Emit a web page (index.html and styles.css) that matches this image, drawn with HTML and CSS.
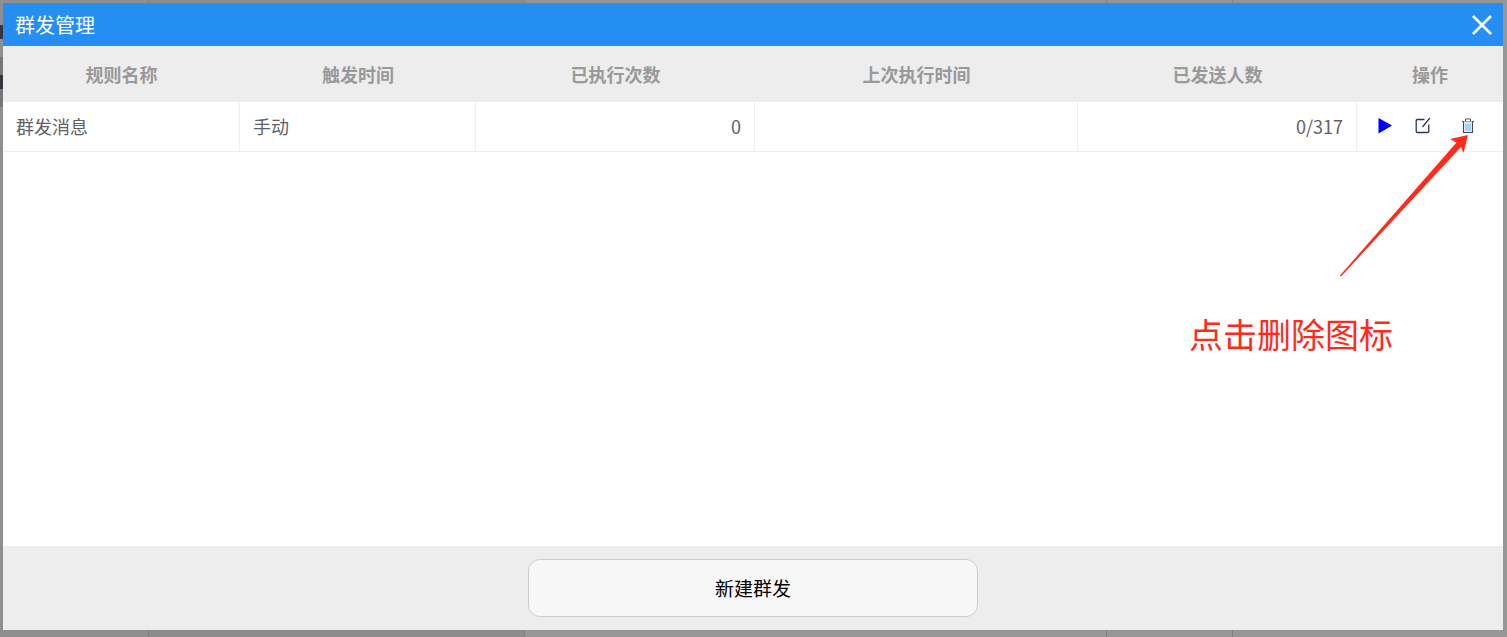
FILE: index.html
```html
<!DOCTYPE html>
<html lang="zh-CN">
<head>
  <meta charset="UTF-8">
  <title>群发管理</title>
  <link rel="stylesheet" href="styles.css">
</head>
<body>
  <!-- page behind the mask, only its edges show -->
  <div class="backdrop">
    <div class="back-col back-first">
      <div class="back-row"><i class="back-mark"></i></div>
      <div class="back-row back-band"><i class="back-mark"></i></div>
    </div>
    <div class="back-col back-second"></div>
    <div class="back-col back-third"></div>
    <div class="back-col back-fourth"></div>
    <div class="back-col back-fifth"></div>
  </div>

  <div class="dialog">
    <div class="dialog-title">
      <span>群发管理</span>
      <svg class="close-icon" viewBox="0 0 20 20" width="20" height="20">
        <path d="M1 1L19 19M19 1L1 19" stroke="#fff" stroke-width="2.6" fill="none"/>
      </svg>
    </div>
    <div class="dialog-body">
      <div class="table-row table-head">
        <div class="cell center">规则名称</div>
        <div class="cell center">触发时间</div>
        <div class="cell center">已执行次数</div>
        <div class="cell center">上次执行时间</div>
        <div class="cell center">已发送人数</div>
        <div class="cell center">操作</div>
      </div>
      <div class="table-row table-data">
        <div class="cell">群发消息</div>
        <div class="cell">手动</div>
        <div class="cell right">0</div>
        <div class="cell"></div>
        <div class="cell right">0/317</div>
        <div class="cell actions">
          <svg viewBox="0 0 16 18" width="16" height="18">
            <path d="M1.5 1L15 8.5L1.5 16.5Z" fill="#0000ff"/>
          </svg>
          <svg viewBox="0 0 16 18" width="16" height="18">
            <path d="M9.5 2.5H2.5Q1.2 2.5 1.2 3.8V14.2Q1.2 15.5 2.5 15.5H12.5Q13.8 15.5 13.8 14.2V7.5" stroke="#27384f" stroke-width="1.3" fill="none"/>
            <path d="M7.5 10L14.8 1" stroke="#27384f" stroke-width="1.2" fill="none"/>
          </svg>
          <svg class="trash-icon" viewBox="0 0 14 18" width="14" height="18">
            <path d="M1 4.5H13M4.5 4.5V2H9.5V4.5" stroke="#4a5664" stroke-width="1" fill="none"/>
            <path d="M2.5 4.5V15.5H11.5V4.5" stroke="#3a4a5c" stroke-width="1.1" fill="#e6f3fc"/>
            <path d="M5 6.5V14M7 6.5V14M9 6.5V14" stroke="#6db2e6" stroke-width="1" fill="none"/>
          </svg>
        </div>
      </div>
    </div>
    <div class="dialog-footer">
      <button class="new-btn">新建群发</button>
    </div>

    <svg class="arrow" viewBox="0 0 140 150" width="140" height="150">
      <path d="M0 144.5L116.5 11.5L110 8L128 4L123.5 22L121 16L1 145.5Z" fill="#ff2a1a"/>
    </svg>
    <div class="hint">点击删除图标</div>
  </div>
</body>
</html>
```

FILE: styles.css
```css
html, body {
  height: 100%;
}

body {
  position: relative;
  margin: 0;
  background: #969696;
  font-family: "Microsoft YaHei", "Noto Sans CJK SC", sans-serif;
  overflow: hidden;
}

.backdrop {
  position: absolute;
  inset: 0;
  display: flex;
}

.back-col {
  box-sizing: border-box;
  border-right: 1px solid #808080;
}

.back-first {
  width: 149px;
  padding-top: 25px;
  background: #8f8f8f;
}

.back-second {
  width: 376px;
  background: #8c8c8c;
}

.back-third {
  width: 582px;
  background: #969696;
}

.back-fourth {
  width: 126px;
  background: #969696;
}

.back-fifth {
  flex: 1;
  border-right: none;
}

.back-row {
  height: 32px;
}

.back-band {
  height: 50px;
  padding-top: 18px;
  box-sizing: border-box;
  background: #777;
}

.back-mark {
  display: block;
  width: 3px;
  height: 14px;
  background: #3a3040;
}

.dialog {
  position: relative;
  display: flex;
  flex-direction: column;
  width: 1500px;
  height: 627px;
  margin-left: 3px;
  top: 3px;
  background: #fff;
}

.dialog-title {
  display: flex;
  align-items: center;
  justify-content: space-between;
  height: 43px;
  padding: 0 11px 0 12px;
  background: #248ef2;
  color: #fff;
  font-size: 20px;
}

.dialog-body {
  flex: 1;
}

.table-row {
  display: grid;
  grid-template-columns: 237px 236px 279px 323px 279px 146px;
}

.table-head {
  height: 56px;
  background: #ededed;
  color: #999;
  font-size: 18px;
  font-weight: 700;
}

.table-data {
  height: 50px;
  border-bottom: 1px solid #ebeef5;
  box-sizing: border-box;
  color: #606266;
  font-size: 18px;
}

.cell {
  display: flex;
  align-items: center;
  padding: 0 13px;
  box-sizing: border-box;
}

.table-data .cell {
  padding-bottom: 2px;
  border-right: 1px solid #ebeef5;
}

.table-data .cell:last-child {
  border-right: none;
}

.center {
  justify-content: center;
}

.right {
  justify-content: flex-end;
}

.table-data .actions {
  gap: 22px;
  padding: 0 20px 1px;
}

.trash-icon {
  margin-left: 8px;
}

.dialog-footer {
  display: flex;
  align-items: center;
  justify-content: center;
  height: 84px;
  background: #ededed;
}

.new-btn {
  width: 450px;
  height: 58px;
  padding: 0 0 2px;
  background: #f7f7f7;
  border: 1px solid #ccc;
  border-radius: 12px;
  color: #000;
  font-family: inherit;
  font-size: 19px;
}

/* annotation drawn over the dialog */
.arrow {
  position: absolute;
  left: 1337px;
  top: 128px;
}

.hint {
  position: absolute;
  left: 1186px;
  top: 309px;
  color: #ff2a1a;
  font-size: 34px;
  line-height: 44px;
  white-space: nowrap;
}
```
